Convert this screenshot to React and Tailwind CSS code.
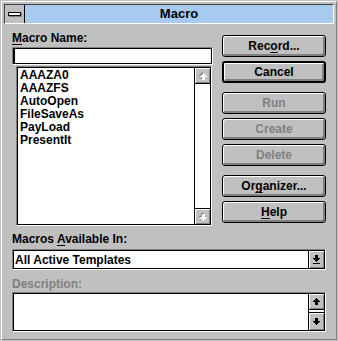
import React from "react";

const UP = "M3 0h1v1h-1z M2 1h3v1h-3z M1 2h5v1h-5z M0 3h7v1h-7z M2 4h3v3h-3z";
const DOWN = "M2 0h3v3h-3z M0 3h7v1h-7z M1 4h5v1h-5z M2 5h3v1h-3z M3 6h1v1h-1z";

const Arrow = ({ d, disabled, bar }) => (
  <svg width="8" height={bar ? 10 : 8} viewBox={bar ? "0 0 8 10" : "0 0 8 8"} shapeRendering="crispEdges">
    {disabled ? (
      <>
        <path d={d} fill="#808080" />
        <path d={d} fill="#ffffff" transform="translate(1 1)" />
      </>
    ) : (
      <path d={d} fill="#000000" />
    )}
    {bar && <rect x="0" y="8" width="7" height="1" fill="#000000" />}
  </svg>
);

const ScrollBtn = ({ d, disabled, className = "" }) => (
  <div
    className={`flex items-center justify-center bg-[#c0c0c0] shadow-[inset_1px_1px_0_#fff,inset_-1px_-1px_0_#808080] ${className}`}
  >
    <Arrow d={d} disabled={disabled} />
  </div>
);

const Button = ({ children, disabled, isDefault }) => (
  <div
    className={`h-[22px] flex items-center justify-center rounded-[3px] border-black bg-[#c0c0c0] shadow-[inset_1px_1px_0_#fff,inset_-2px_-2px_0_#808080] ${
      isDefault ? "border-2" : "border"
    } ${disabled ? "text-[#808080]" : "text-black"}`}
  >
    {children}
  </div>
);

const U = ({ children }) => (
  <span className="underline decoration-1 underline-offset-2">{children}</span>
);

const macros = ["AAAZA0", "AAAZFS", "AutoOpen", "FileSaveAs", "PayLoad", "PresentIt"];

export default function App() {
  return (
    <div className="w-[338px] h-[341px] bg-[#c0c0c0] p-px font-['Liberation_Sans',Arial,sans-serif] font-bold text-[12px] leading-[14px] text-black select-none">
      <div className="h-[339px] border border-t-white border-l-white border-r-[#808080] border-b-[#808080] flex flex-col">
        {/* title bar */}
        <div className="mx-[2px] mt-[2px] h-[20px] flex border border-t-[#404040] border-l-[#404040] border-r-white border-b-white">
          <div className="w-[20px] border-r border-black flex items-center justify-center">
            <div className="w-[13px] h-[4px] border border-black bg-white shadow-[1px_1px_0_#808080]" />
          </div>
          <div className="flex-1 bg-[#a6caf0] flex items-center justify-center text-[13px]">Macro</div>
        </div>

        {/* content */}
        <div className="flex-1 pl-[10px] pr-[10px] pt-[7px] flex flex-col">
          <div className="flex gap-[9px]">
            <div className="w-[201px] flex flex-col">
              <div>
                <U>M</U>acro Name:
              </div>
              <div className="mt-[2px] h-[18px] border border-t-[#808080] border-l-[#808080] border-r-white border-b-white">
                <div className="h-full border border-black bg-white flex items-stretch">
                  <div className="w-px bg-black" />
                </div>
              </div>
              <div className="ml-[4px] mt-[1px] w-[196px] h-[160px] border border-t-[#808080] border-l-[#808080] border-r-white border-b-white">
                <div className="h-full border border-black bg-white flex">
                  <div className="flex-1 pl-[2px] pt-[1px] leading-[13px]">
                    {macros.map((m) => (
                      <div key={m}>{m}</div>
                    ))}
                  </div>
                  <div className="w-[16px] border-l border-black flex flex-col">
                    <ScrollBtn d={UP} disabled className="h-[16px] border-b border-black" />
                    <div className="flex-1 bg-white" />
                    <ScrollBtn d={DOWN} disabled className="h-[16px] border-t border-black" />
                  </div>
                </div>
              </div>
            </div>

            <div className="w-[104px] pt-[4px] flex flex-col">
              <Button>
                Rec<U>o</U>rd...
              </Button>
              <div className="mt-[4px]">
                <Button isDefault>Cancel</Button>
              </div>
              <div className="mt-[9px]">
                <Button disabled>Run</Button>
              </div>
              <div className="mt-[4px]">
                <Button disabled>Create</Button>
              </div>
              <div className="mt-[4px]">
                <Button disabled>Delete</Button>
              </div>
              <div className="mt-[9px]">
                <Button>
                  Or<U>g</U>anizer...
                </Button>
              </div>
              <div className="mt-[4px]">
                <Button>
                  <U>H</U>elp
                </Button>
              </div>
            </div>
          </div>

          <div className="mt-[6px]">
            Macros <U>A</U>vailable In:
          </div>
          <div className="mt-[3px] h-[21px] border border-t-[#808080] border-l-[#808080] border-r-white border-b-white">
            <div className="h-full border border-black bg-white flex">
              <div className="flex-1 pl-[1px] flex items-center">All Active Templates</div>
              <div className="w-[16px] border-l border-black bg-[#c0c0c0] shadow-[inset_1px_1px_0_#fff,inset_-1px_-1px_0_#808080] flex items-center justify-center">
                <Arrow d={DOWN} bar />
              </div>
            </div>
          </div>

          <div className="mt-[7px] text-[#808080]">Description:</div>
          <div className="mt-[1px] h-[40px] border border-t-[#808080] border-l-[#808080] border-r-white border-b-white">
            <div className="h-full border border-black bg-white flex">
              <div className="flex-1" />
              <div className="w-[16px] border-l border-black flex flex-col">
                <ScrollBtn d={UP} className="h-[16px] border-b border-black" />
                <div className="h-[2px] bg-white" />
                <ScrollBtn d={DOWN} className="flex-1 border-t border-black" />
              </div>
            </div>
          </div>
        </div>
      </div>
    </div>
  );
}
